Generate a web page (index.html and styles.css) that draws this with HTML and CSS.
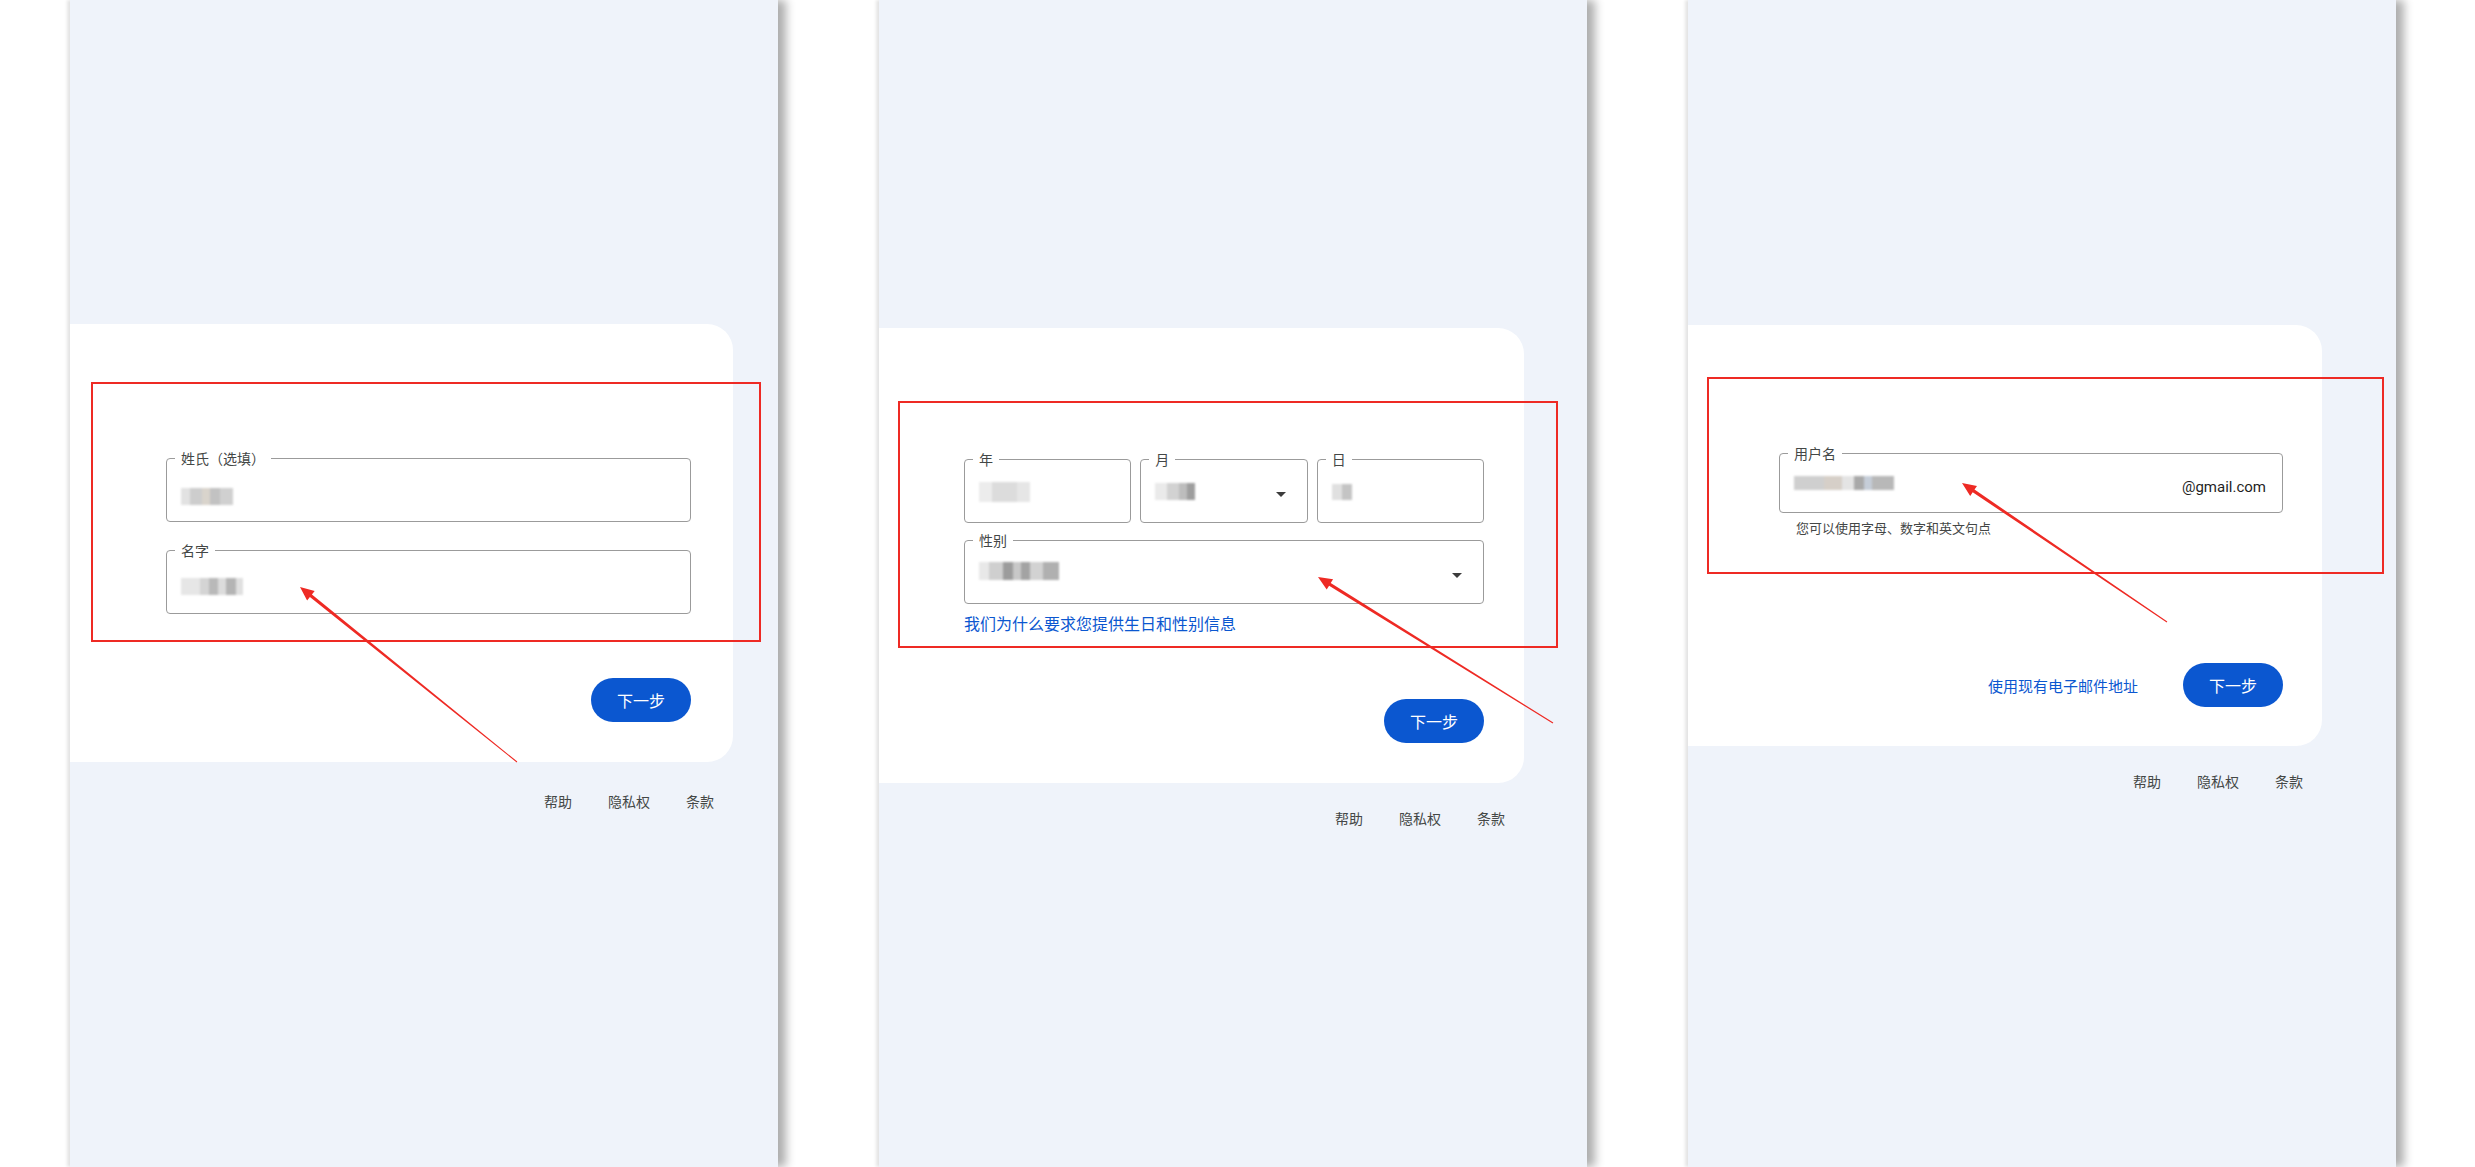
FILE: index.html
```html
<!DOCTYPE html>
<html lang="zh-CN">
<head>
  <meta charset="UTF-8">
  <title>创建 Google 账号</title>
  <link rel="stylesheet" href="styles.css">
</head>
<body>

<div class="screens">

  <!-- step 1: name -->
  <div class="phone phone-name">
    <div class="stack">
      <div class="card">
        <fieldset class="field">
          <legend>姓氏（选填）</legend>
          <div class="field-body"><span class="blur blur-last"></span></div>
        </fieldset>
        <fieldset class="field field-next">
          <legend>名字</legend>
          <div class="field-body"><span class="blur blur-first"></span></div>
        </fieldset>
        <div class="actions">
          <button class="btn">下一步</button>
        </div>
      </div>
      <div class="links">
        <span>帮助</span><span>隐私权</span><span>条款</span>
      </div>
    </div>
  </div>

  <!-- step 2: birthday / gender -->
  <div class="phone phone-birth">
    <div class="stack">
      <div class="card">
        <div class="date-row">
          <fieldset class="field">
            <legend>年</legend>
            <div class="field-body"><span class="blur blur-year"></span></div>
          </fieldset>
          <fieldset class="field field-select">
            <legend>月</legend>
            <div class="field-body">
              <span class="blur blur-month"></span>
              <svg class="caret" width="10" height="5" viewBox="0 0 10 5"><path d="M0 0h10L5 5z"/></svg>
            </div>
          </fieldset>
          <fieldset class="field">
            <legend>日</legend>
            <div class="field-body"><span class="blur blur-day"></span></div>
          </fieldset>
        </div>
        <fieldset class="field field-select field-gender">
          <legend>性别</legend>
          <div class="field-body">
            <span class="blur blur-gender"></span>
            <svg class="caret" width="10" height="5" viewBox="0 0 10 5"><path d="M0 0h10L5 5z"/></svg>
          </div>
        </fieldset>
        <a class="why-link">我们为什么要求您提供生日和性别信息</a>
        <div class="actions">
          <button class="btn">下一步</button>
        </div>
      </div>
      <div class="links">
        <span>帮助</span><span>隐私权</span><span>条款</span>
      </div>
    </div>
  </div>

  <!-- step 3: username -->
  <div class="phone phone-user">
    <div class="stack">
      <div class="card">
        <fieldset class="field field-user">
          <legend>用户名</legend>
          <div class="field-body">
            <span class="blur blur-user"></span>
            <span class="suffix">@gmail.com</span>
          </div>
        </fieldset>
        <p class="hint">您可以使用字母、数字和英文句点</p>
        <div class="actions">
          <a class="alt-link">使用现有电子邮件地址</a>
          <button class="btn">下一步</button>
        </div>
      </div>
      <div class="links">
        <span>帮助</span><span>隐私权</span><span>条款</span>
      </div>
    </div>
  </div>

</div>

<!-- red annotations drawn over the screenshots -->
<svg class="annot" width="2475" height="1167" viewBox="0 0 2475 1167">
  <g fill="none" stroke="#ee2a24" stroke-width="2">
    <rect x="92" y="383" width="668" height="258"/>
    <rect x="899" y="402" width="658" height="245"/>
    <rect x="1708" y="378" width="675" height="195"/>
  </g>
  <g fill="#ee2a24">
    <polygon points="517.3,761.6 311.9,594.6 314.7,591.1 300,587 307.1,600.5 309.9,597.0 516.7,762.4"/>
    <polygon points="1553.3,722.6 1330.7,583.0 1333.1,579.3 1318,577 1326.7,589.5 1329.1,585.8 1552.7,723.4"/>
    <polygon points="2167.3,621.6 1974.5,489.6 1977.0,485.9 1962,483 1970.2,495.9 1972.7,492.2 2166.7,622.4"/>
  </g>
</svg>

</body>
</html>
```

FILE: styles.css
```css
/* ============================
   Page
============================ */
* {
  box-sizing: border-box;
}

body {
  margin: 0;
  width: 2475px;
  height: 1167px;
  overflow: hidden;
  position: relative;
  background: #fff;
  font-family: "Noto Sans CJK SC", "Noto Sans", sans-serif;
  color: #1f1f1f;
  text-spacing-trim: space-all;
}

.screens {
  display: flex;
  gap: 101px;
  padding-left: 70px;
  height: 100%;
}

.phone {
  width: 708px;
  height: 100%;
  flex-shrink: 0;
  background: #eff3fa;
  box-shadow: 8px 0 9px rgba(0, 0, 0, 0.32), -3px 0 3px rgba(0, 0, 0, 0.1);
}

/* ============================
   Card
============================ */
.card {
  background: #fff;
  border-radius: 0 26px 26px 0;
  display: flex;
  flex-direction: column;
}

.phone-name .stack { width: 663px; margin-top: 324px; }
.phone-name .card { padding: 125px 42px 40px 96px; }
.phone-name .links { margin-top: 30px; }

.phone-birth .stack { width: 645px; margin-top: 328px; }
.phone-birth .card { padding: 122px 40px 40px 85px; }
.phone-birth .links { margin-top: 26px; }

.phone-user .stack { width: 634px; margin-top: 325px; }
.phone-user .card { padding: 119px 39px 39px 91px; }
.phone-user .links { margin-top: 26px; }

/* ============================
   Outlined fields
============================ */
.field {
  margin: 0;
  padding: 0 16px 0 14px;
  min-width: 0;
  border: 1px solid #9b9b9b;
  border-radius: 4px;
}

.field legend {
  margin-left: -6px;
  padding: 0 6px;
  font-size: 14px;
  line-height: 18px;
  color: #444746;
}

.field-body {
  height: 54px;
  display: flex;
  align-items: center;
  justify-content: space-between;
}

.field-next {
  margin-top: 19px;
}

.field-select {
  padding-right: 21px;
}

.caret {
  fill: #3c3c3c;
  margin-bottom: 2px;
}

.date-row {
  display: grid;
  grid-template-columns: repeat(3, 1fr);
  gap: 9px;
}

.field-gender {
  margin-top: 8px;
}

.field-user .field-body {
  height: 50px;
}

.suffix {
  font-family: Roboto, "Liberation Sans", sans-serif;
  font-size: 15px;
  color: #1f1f1f;
}

/* pixelated, hidden values */
.blur {
  display: inline-block;
  height: 17px;
  filter: blur(1px);
  background: linear-gradient(90deg, #e2e2e2 0 18%, #cdcdcd 18% 40%, #d9d4cc 40% 55%, #c2c2c2 55% 75%, #d0d0d0 75%);
}

.blur-last { width: 52px; margin-top: 4px; }
.blur-first {
  width: 62px;
  background: linear-gradient(90deg, #e6e6e6 0 30%, #d4d4d4 30% 45%, #b9b9b9 45% 60%, #dcdcdc 60% 72%, #b4b4b4 72% 88%, #e0e0e0 88%);
}
.blur-year { width: 51px; height: 20px; margin-top: -6px; background: linear-gradient(90deg, #ececec 0 25%, #dcdcdc 25% 75%, #e6e6e6 75%); }
.blur-month {
  width: 40px;
  margin-top: -8px;
  background: linear-gradient(90deg, #eaeaea 0 30%, #d2d2d2 30% 60%, #bdbdbd 60% 80%, #9e9e9e 80%);
}
.blur-day { width: 20px; height: 16px; margin-top: -6px; background: linear-gradient(90deg, #e0e0e0 0 50%, #c4c4c4 50%); }
.blur-gender {
  width: 80px;
  height: 18px;
  margin-top: -10px;
  background: linear-gradient(90deg, #e8e8e8 0 12%, #cfcfcf 12% 30%, #9c9c9c 30% 42%, #c8c8c8 42% 52%, #a3a3a3 52% 64%, #d2d2d2 64% 80%, #b0b0b0 80%);
}
.blur-user {
  width: 100px;
  height: 14px;
  margin-top: -8px;
  background: linear-gradient(90deg, #cfcfcf 0 30%, #d6cfc8 30% 48%, #e4e4e4 48% 60%, #a9a9a9 60% 70%, #c5cdd8 70% 78%, #b8b8b8 78%);
}

/* ============================
   Text links, hints, buttons
============================ */
.why-link {
  margin-top: 9px;
  font-size: 16px;
  line-height: 20px;
  color: #0b57d0;
}

.hint {
  margin: 6px 0 0;
  padding-left: 17px;
  font-size: 13px;
  line-height: 18px;
  color: #444746;
}

.actions {
  display: flex;
  justify-content: flex-end;
  align-items: center;
  gap: 45px;
}

.phone-name .actions { margin-top: 64px; }
.phone-birth .actions { margin-top: 66px; }
.phone-user .actions { margin-top: 126px; }

.alt-link {
  font-size: 15px;
  color: #0b57d0;
}

.btn {
  height: 44px;
  padding: 0 26px;
  border: none;
  border-radius: 22px;
  background: #0b57d0;
  color: #fff;
  font-family: inherit;
  font-size: 16px;
}

/* ============================
   Footer links
============================ */
.links {
  display: flex;
  justify-content: flex-end;
  gap: 36px;
  padding-right: 19px;
  font-size: 14px;
  line-height: 18px;
  color: #444746;
}

/* ============================
   Annotation layer
============================ */
.annot {
  position: absolute;
  top: 0;
  left: 0;
  pointer-events: none;
}
```
